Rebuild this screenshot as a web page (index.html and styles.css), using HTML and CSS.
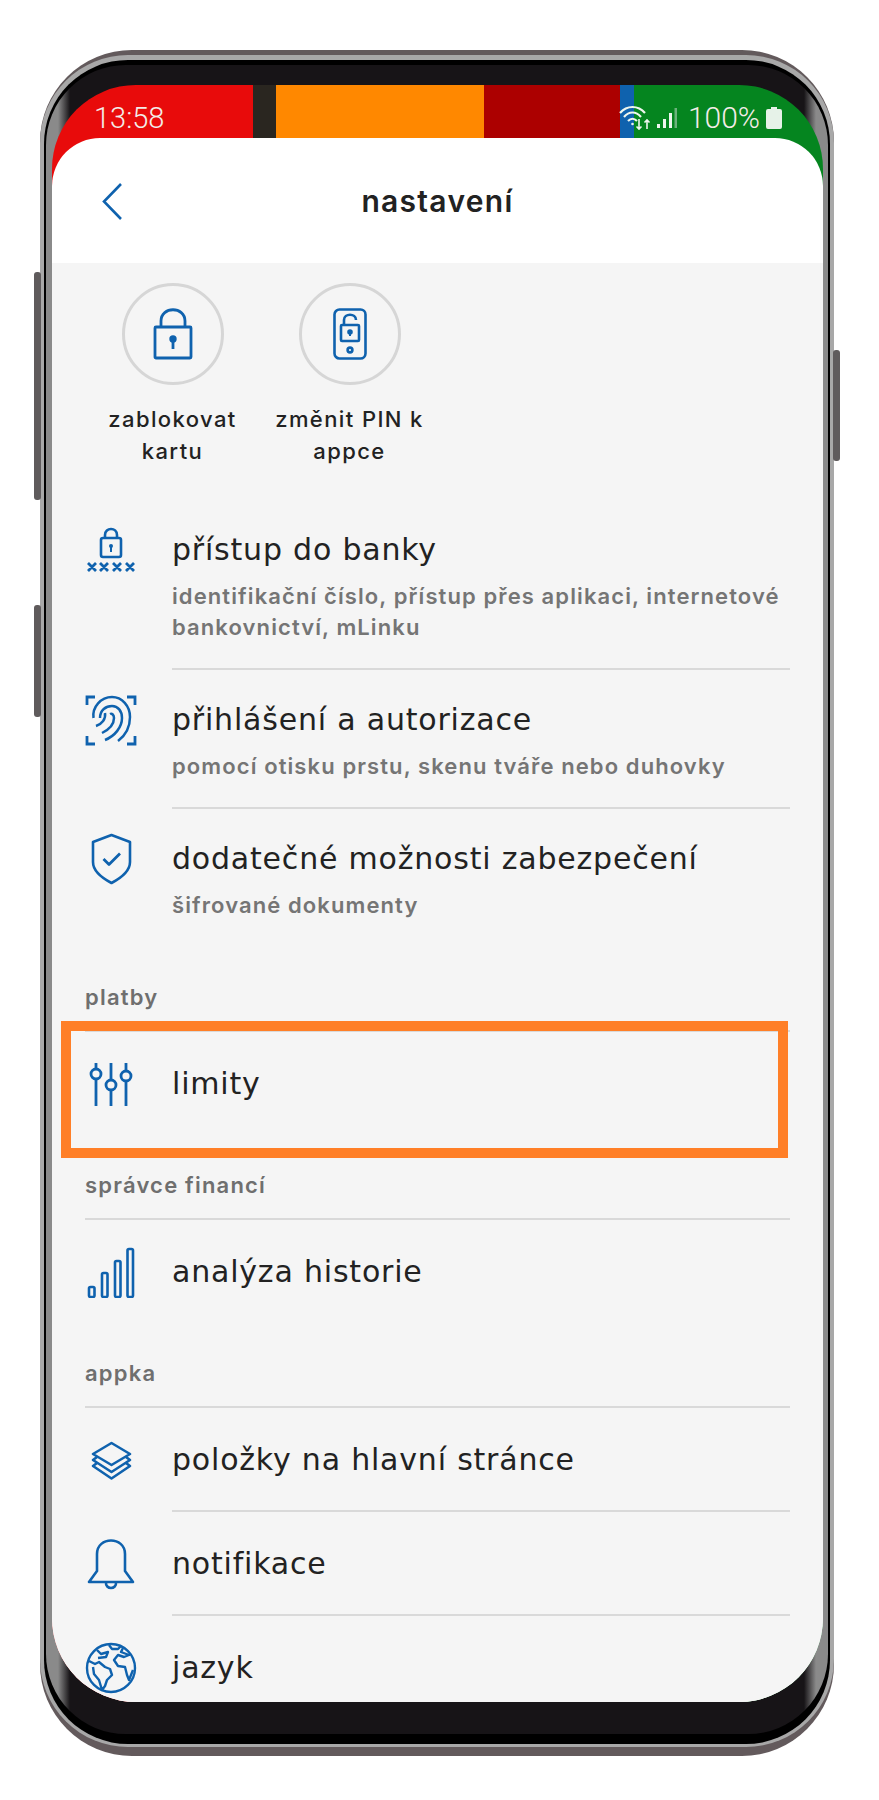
FILE: index.html
```html
<!DOCTYPE html>
<html lang="cs">
<head>
    <meta charset="UTF-8">
    <title>nastavení</title>
    <link rel="stylesheet" href="styles.css">
</head>
<body>
    <div class="phone">
        <div class="sideKey keyA"></div>
        <div class="sideKey keyB"></div>
        <div class="sideKey keyC"></div>
        <div class="rim">
            <div class="blackRing">
                <div class="bezel">
                    <div class="screen">
                        <div class="statusBar">
                            <span class="clock">13:58</span>
                            <div class="statusRight">
                                <svg class="wifi" width="32" height="26" viewBox="0 0 32 26" fill="none" stroke="#eef6ee" stroke-width="2.2">
                                    <path d="M1 8C8 0 19 0 26 8"/>
                                    <path d="M5 12C10 6 17 6 22 12"/>
                                    <path d="M9 16C12 13 15 13 18 16"/>
                                    <circle cx="13.5" cy="19" r="1.3" fill="#eef6ee" stroke="none"/>
                                    <path d="M20 14V24M17.5 21.5L20 24L22.5 21.5" stroke-width="1.6"/>
                                    <path d="M28 24V15M25.5 17.5L28 15L30.5 17.5" stroke-width="1.6"/>
                                </svg>
                                <svg class="signal" width="20" height="22" viewBox="0 0 20 22">
                                    <rect x="0" y="17" width="3" height="4" fill="#eef6ee"/>
                                    <rect x="6" y="12" width="3" height="9" fill="#eef6ee"/>
                                    <rect x="12" y="6" width="3" height="15" fill="#eef6ee"/>
                                    <rect x="17.500" y="1" width="2.500" height="20" fill="#6cb27c"/>
                                </svg>
                                <span class="battery">100%</span>
                                <svg width="16" height="22" viewBox="0 0 16 22">
                                    <path d="M5 0H11V2H14Q16 2 16 4V20Q16 22 14 22H2Q0 22 0 20V4Q0 2 2 2H5Z" fill="#e6f2e8"/>
                                </svg>
                            </div>
                        </div>

                        <div class="card">
                            <div class="header">
                                <svg class="backArrow" width="20" height="37" viewBox="0 0 20 37" fill="none" stroke="#0f62ae" stroke-width="2.6">
                                    <path d="M19 1L2 18.500L19 36"/>
                                </svg>
                                <div class="pageTitle">nastavení</div>
                            </div>

                            <div class="settings">
                                <div class="quickActions">
                                    <div class="quickAction">
                                        <div class="circle">
                                            <svg width="40" height="52" viewBox="0 0 40 52" fill="none" stroke="#0f62ae" stroke-width="2.8" stroke-linejoin="round">
                                                <rect x="2" y="19" width="36" height="31" rx="1"/>
                                                <path d="M8 19V13C8 -2 32 -2 32 13V19"/>
                                                <circle cx="20" cy="31" r="2.300" fill="#0f62ae"/>
                                                <path d="M20 32V41"/>
                                            </svg>
                                        </div>
                                        <div class="quickLabel">zablokovat<br>kartu</div>
                                    </div>
                                    <div class="quickAction">
                                        <div class="circle">
                                            <svg width="34" height="52" viewBox="0 0 34 52" fill="none" stroke="#0f62ae" stroke-width="2.6" stroke-linejoin="round">
                                                <rect x="1.500" y="1.500" width="31" height="49" rx="5"/>
                                                <rect x="8" y="17" width="18" height="16" rx="1"/>
                                                <path d="M11 17V12C11 5 23 5 23 12"/>
                                                <circle cx="17" cy="24" r="1.500" fill="#0f62ae"/>
                                                <path d="M17 24V28" stroke-width="2"/>
                                                <circle cx="17" cy="42" r="2.400"/>
                                            </svg>
                                        </div>
                                        <div class="quickLabel">změnit PIN k<br>appce</div>
                                    </div>
                                </div>

                                <div class="row first">
                                    <svg class="rowIcon" width="52" height="52" viewBox="0 0 52 52" fill="none" stroke="#0f62ae" stroke-width="2.6">
                                        <rect x="16" y="14" width="20" height="19" rx="2"/>
                                        <path d="M20 14V11C20 3 32 3 32 11V14"/>
                                        <circle cx="26" cy="22" r="2" fill="#0f62ae" stroke="none"/>
                                        <path d="M26 22V28" stroke-width="2"/>
                                        <path stroke-width="2.800" d="M3 39L11 47M11 39L3 47M15 39L23 47M23 39L15 47M28 39L36 47M36 39L28 47M41 39L49 47M49 39L41 47"/>
                                    </svg>
                                    <div class="rowBody">
                                        <div class="rowTitle">přístup do banky</div>
                                        <div class="rowSub">identifikační číslo, přístup přes aplikaci, internetové bankovnictví, mLinku</div>
                                    </div>
                                </div>

                                <div class="row">
                                    <svg class="rowIcon" width="52" height="52" viewBox="0 0 52 52" fill="none" stroke="#0f62ae" stroke-width="2.500">
                                        <path stroke-width="2.800" d="M10 3H2V11M42 3H50V11M2 42V50H10M50 42V50H42"/>
                                        <path d="M8.500 24C7 13 16 3 27 3C37 3 45 12 45 23C45 32 41 41 33 47"/>
                                        <path d="M15 24C15 16 21 12 27 12C33 12 37 17 37 24C37 33 30 42 20 46"/>
                                        <path d="M11 32C17 30 21 25 20 19"/>
                                        <path d="M17 39C23 36 29 31 29 24C29 21 27 19 25 20"/>
                                    </svg>
                                    <div class="rowBody">
                                        <div class="rowTitle">přihlášení a autorizace</div>
                                        <div class="rowSub">pomocí otisku prstu, skenu tváře nebo duhovky</div>
                                    </div>
                                </div>

                                <div class="row last">
                                    <svg class="rowIcon" width="52" height="52" viewBox="0 0 52 52" fill="none" stroke="#0f62ae" stroke-width="2.600" stroke-linejoin="round">
                                        <path d="M26.500 2L45 9V29C45 38 36 45 26.500 50C17 45 8 38 8 29V9Z"/>
                                        <path d="M18.500 26L24 31.500L35 20.500" stroke-width="2.800"/>
                                    </svg>
                                    <div class="rowBody">
                                        <div class="rowTitle">dodatečné možnosti zabezpečení</div>
                                        <div class="rowSub">šifrované dokumenty</div>
                                    </div>
                                </div>

                                <div class="sectionLabel">platby</div>
                                <div class="row plain last">
                                    <div class="highlightBox"></div>
                                    <svg class="rowIcon" width="52" height="52" viewBox="0 0 52 52" fill="none" stroke="#0f62ae" stroke-width="2.800">
                                        <path d="M11 5V11M11 21V48M26 5V22M26 32V48M41 5V13M41 23V48"/>
                                        <circle cx="11" cy="16" r="5"/>
                                        <circle cx="26" cy="27" r="5"/>
                                        <circle cx="41" cy="18" r="5"/>
                                    </svg>
                                    <div class="rowBody">
                                        <div class="rowTitle">limity</div>
                                    </div>
                                </div>

                                <div class="sectionLabel">správce financí</div>
                                <div class="row plain last">
                                    <svg class="rowIcon" width="52" height="52" viewBox="0 0 52 52" fill="none" stroke="#0f62ae" stroke-width="2.600">
                                        <rect x="4" y="41" width="5.500" height="10" rx="1.500"/>
                                        <rect x="17" y="27" width="5.500" height="24" rx="1.500"/>
                                        <rect x="30" y="15" width="5.500" height="36" rx="1.500"/>
                                        <rect x="42.500" y="3" width="5.500" height="48" rx="1.500"/>
                                    </svg>
                                    <div class="rowBody">
                                        <div class="rowTitle">analýza historie</div>
                                    </div>
                                </div>

                                <div class="sectionLabel">appka</div>
                                <div class="row plain">
                                    <svg class="rowIcon" width="52" height="52" viewBox="0 0 52 52" fill="none" stroke="#0f62ae" stroke-width="2.600" stroke-linejoin="round">
                                        <path d="M26.500 9L45 20L26.500 31L8 20Z"/>
                                        <path d="M12 23L8 26L26.500 38L45 26L41 23"/>
                                        <path d="M12 29L8 32L26.500 44.500L45 32L41 29"/>
                                    </svg>
                                    <div class="rowBody">
                                        <div class="rowTitle">položky na hlavní stránce</div>
                                    </div>
                                </div>
                                <div class="row plain">
                                    <svg class="rowIcon" width="52" height="52" viewBox="0 0 52 52" fill="none" stroke="#0f62ae" stroke-width="2.600" stroke-linejoin="round">
                                        <path d="M4 44L12 33V16C12 -2 40 -2 40 16V33L48 44Z"/>
                                        <path d="M21 44C20 52 32 52 31 44"/>
                                    </svg>
                                    <div class="rowBody">
                                        <div class="rowTitle">notifikace</div>
                                    </div>
                                </div>
                                <div class="row plain last">
                                    <svg class="rowIcon" width="52" height="52" viewBox="0 0 52 52" fill="none" stroke="#0f62ae" stroke-width="2.400" stroke-linejoin="round">
                                        <circle cx="26" cy="26" r="24"/>
                                        <path d="M4 19L10 22L14 20L20 25L25 27L27 33L22 38L20 44L17 48L14 38L9 32L8 25"/>
                                        <path d="M24 3L27 7L33 7L36 4"/>
                                        <path d="M38 6L36 10L44 13L39 15L33 13L29 18L33 24L40 25L42 33L44 38L48 28"/>
                                        <path d="M12 8L16 12L23 10L21 15L13 16"/>
                                    </svg>
                                    <div class="rowBody">
                                        <div class="rowTitle">jazyk</div>
                                    </div>
                                </div>
                            </div>
                        </div>
                    </div>
                </div>
            </div>
        </div>
    </div>
</body>
</html>
```

FILE: styles.css
```css
body {
    margin: 0;
    background-color: #fff;
    font-family: Inter, "Liberation Sans", sans-serif;
    color: #222;
}
.phone {
    position: relative;
    box-sizing: border-box;
    width: 794px;
    height: 1706px;
    margin: 50px 0 0 40px;
    padding: 5px 0 9px;
    background-color: #635a5c;
    border-radius: 92px;
}
.sideKey {
    position: absolute;
    width: 7px;
    background-color: #5f5b5c;
    border-radius: 3px;
}
.keyA {
    left: -6px;
    top: 222px;
    height: 228px;
}
.keyB {
    left: -6px;
    top: 555px;
    height: 112px;
}
.keyC {
    right: -6px;
    top: 300px;
    height: 111px;
}
.rim {
    height: 100%;
    box-sizing: border-box;
    padding: 5px 4px 3px;
    background-color: #a8a8a8;
    border-radius: 88px;
}
.blackRing {
    height: 100%;
    box-sizing: border-box;
    padding: 5px 2px 10px;
    background-color: #000;
    border-radius: 84px;
}
.bezel {
    height: 100%;
    box-sizing: border-box;
    padding: 20px 5px 32px 6px;
    border-radius: 80px;
    background: linear-gradient(90deg, #8a8a8a 12px, #171417 24px, #171417 calc(100% - 24px), #8a8a8a calc(100% - 12px));
}
.screen {
    height: 100%;
    overflow: hidden;
    display: flex;
    flex-direction: column;
    border-radius: 84px;
    background: linear-gradient(90deg, #e80b0b 201px, #2a2620 201px, #2a2620 224px, #ff8800 224px, #ff8800 432px, #ac0000 432px, #ac0000 568px, #0f62ae 568px, #0f62ae 582px, #05851f 582px);
}
.statusBar {
    flex: 0 0 53px;
    display: flex;
    align-items: center;
    justify-content: space-between;
    padding: 12px 41px 0 42px;
    box-sizing: border-box;
    font-family: Roboto, sans-serif;
    font-weight: 300;
    font-size: 29px;
    color: #f3ece8;
}
.statusRight {
    display: flex;
    align-items: center;
}
.wifi {
    margin-right: 6px;
}
.battery {
    margin: 0 6px 0 11px;
    font-size: 30px;
}
.card {
    flex: 1;
    min-height: 0;
    display: flex;
    flex-direction: column;
    background-color: #fff;
    border-radius: 48px 48px 0 0;
}
.header {
    flex: 0 0 125px;
    position: relative;
    display: flex;
    align-items: center;
    justify-content: center;
}
.backArrow {
    position: absolute;
    left: 50px;
    top: 45px;
}
.pageTitle {
    font-size: 30px;
    font-weight: 600;
    letter-spacing: 1.3px;
}
.settings {
    flex: 1;
    min-height: 0;
    overflow: hidden;
    padding: 20px 33px 0;
    background-color: #f5f5f5;
}
.quickActions {
    display: flex;
    margin: 0 0 1px -1px;
}
.quickAction {
    width: 177px;
    display: flex;
    flex-direction: column;
    align-items: center;
}
.circle {
    box-sizing: border-box;
    width: 102px;
    height: 102px;
    border: 3px solid #d6d6d6;
    border-radius: 50%;
    display: flex;
    align-items: center;
    justify-content: center;
}
.quickLabel {
    margin-top: 18px;
    font-size: 22px;
    font-weight: 500;
    line-height: 32px;
    letter-spacing: 1.4px;
    text-align: center;
    white-space: nowrap;
}
.row {
    position: relative;
    display: flex;
}
.row.first {
    margin-top: 33px;
}
.rowIcon {
    flex-shrink: 0;
    margin: 24px 35px 0 0;
}
.row.plain .rowIcon {
    margin-top: 26px;
}
.rowBody {
    flex: 1;
    padding: 32px 0 25px;
    border-bottom: 2px solid #d9d9d9;
}
.row.plain .rowBody {
    padding: 34px 0 32px;
}
.row.last .rowBody {
    border-bottom: none;
}
.rowTitle {
    font-family: "DejaVu Sans", sans-serif;
    font-size: 30px;
    line-height: 36px;
    letter-spacing: 0.8px;
}
.rowSub {
    margin-top: 13px;
    font-size: 22px;
    font-weight: 600;
    line-height: 31px;
    color: #757575;
    letter-spacing: 1.1px;
}
.sectionLabel {
    margin-top: 37px;
    padding-bottom: 19px;
    border-bottom: 2px solid #d9d9d9;
    font-size: 22px;
    font-weight: 600;
    line-height: 28px;
    color: #6f6f6f;
    letter-spacing: 1.2px;
}
.highlightBox {
    position: absolute;
    box-sizing: border-box;
    top: -11px;
    left: -24px;
    right: 2px;
    bottom: -24px;
    border: 10px solid #ff7f27;
}
```
